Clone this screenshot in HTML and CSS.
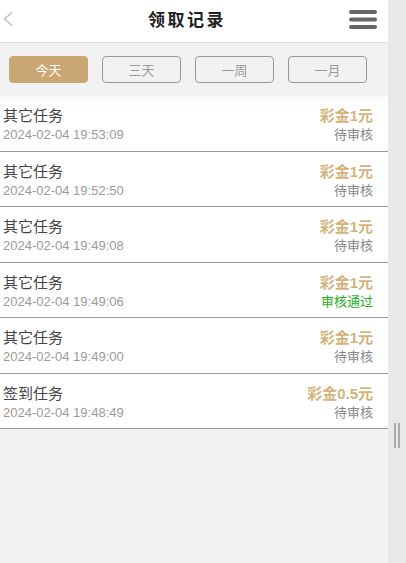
FILE: index.html
```html
<!DOCTYPE html>
<html lang="zh">
<head>
<meta charset="utf-8">
<title>领取记录</title>
<link rel="stylesheet" href="styles.css">
</head>
<body>
<div class="page">
  <div class="main">
    <header class="header">
      <span class="back">
        <svg width="12" height="16" viewBox="0 0 12 16"><path d="M10 1.5 L2.5 8 L10 14.5" fill="none" stroke="#bbb" stroke-width="1.4"/></svg>
      </span>
      <h1 class="title">领取记录</h1>
      <span class="menu">
        <svg width="28" height="19" viewBox="0 0 28 19"><rect x="0" y="0" width="28" height="4" rx="2" fill="#666"/><rect x="0" y="7.5" width="28" height="4" rx="2" fill="#666"/><rect x="0" y="15" width="28" height="4" rx="2" fill="#666"/></svg>
      </span>
    </header>
    <nav class="filters">
      <button class="btn active">今天</button>
      <button class="btn">三天</button>
      <button class="btn">一周</button>
      <button class="btn">一月</button>
    </nav>
    <ul class="list">
      <li class="row"><div class="left"><div class="name">其它任务</div><div class="date">2024-02-04 19:53:09</div></div><div class="right"><div class="amount">彩金1元</div><div class="status">待审核</div></div></li>
      <li class="row"><div class="left"><div class="name">其它任务</div><div class="date">2024-02-04 19:52:50</div></div><div class="right"><div class="amount">彩金1元</div><div class="status">待审核</div></div></li>
      <li class="row"><div class="left"><div class="name">其它任务</div><div class="date">2024-02-04 19:49:08</div></div><div class="right"><div class="amount">彩金1元</div><div class="status">待审核</div></div></li>
      <li class="row"><div class="left"><div class="name">其它任务</div><div class="date">2024-02-04 19:49:06</div></div><div class="right"><div class="amount">彩金1元</div><div class="status ok">审核通过</div></div></li>
      <li class="row"><div class="left"><div class="name">其它任务</div><div class="date">2024-02-04 19:49:00</div></div><div class="right"><div class="amount">彩金1元</div><div class="status">待审核</div></div></li>
      <li class="row"><div class="left"><div class="name">签到任务</div><div class="date">2024-02-04 19:48:49</div></div><div class="right"><div class="amount">彩金0.5元</div><div class="status">待审核</div></div></li>
    </ul>
  </div>
  <aside class="side"><span class="grip"></span></aside>
</div>
</body>
</html>
```
FILE: styles.css
```css
* { box-sizing: border-box; margin: 0; padding: 0; }
html, body { height: 100%; }
body {
  font-family: "Liberation Sans", Arial, "Noto Sans CJK SC", sans-serif;
  background: #f2f2f2;
}
.page { display: flex; height: 563px; }
.main { flex: 1; background: #f2f2f2; }
.side {
  width: 18px;
  background: #e8e8e8;
  display: flex;
  justify-content: center;
  padding-top: 423px;
}
.grip {
  width: 6px;
  height: 25px;
  border-left: 2px solid #aaa;
  border-right: 2px solid #aaa;
}
.header {
  height: 43px;
  background: #fff;
  border-bottom: 1px solid #ddd;
  display: flex;
  align-items: center;
  justify-content: space-between;
  padding: 0 11px 0 2px;
}
.back { display: flex; width: 30px; padding-bottom: 4px; }
.title {
  font-family: "Noto Sans CJK SC", sans-serif;
  font-size: 17px;
  font-weight: 600;
  letter-spacing: 2.5px;
  color: #222;
  line-height: 20px;
  margin-left: -7px;
  padding-bottom: 4px;
}
.menu { display: flex; padding-bottom: 3px; }
.filters {
  height: 53px;
  display: flex;
  gap: 14px;
  padding: 13px 0 0 9px;
  box-shadow: 0 6px 10px rgba(0,0,0,0.03);
  position: relative;
}
.btn {
  width: 79px;
  height: 27px;
  border: 1px solid #999;
  border-radius: 4px;
  background: transparent;
  font-family: "Noto Sans CJK SC", sans-serif;
  font-size: 13px;
  color: #999;
  line-height: 25px;
}
.btn.active { background: #c9a672; border-color: #c9a672; color: #fff; }
.list { list-style: none; }
.row {
  height: 55.5px;
  background: #fff;
  border-bottom: 1px solid #999;
  display: flex;
  justify-content: space-between;
  padding: 10px 15px 0 3px;
}
.name, .amount {
  font-size: 15px;
  line-height: 20px;
  font-family: "Liberation Sans", "Noto Sans CJK SC", sans-serif;
}
.name { color: #444; }
.date, .status { font-size: 13px; line-height: 18px; color: #999; }
.date { color: #9a9a9a; }
.right { text-align: right; }
.amount { color: #d4b27c; font-weight: bold; }
.status { color: #888; }
.status.ok { color: #22b022; }
```
